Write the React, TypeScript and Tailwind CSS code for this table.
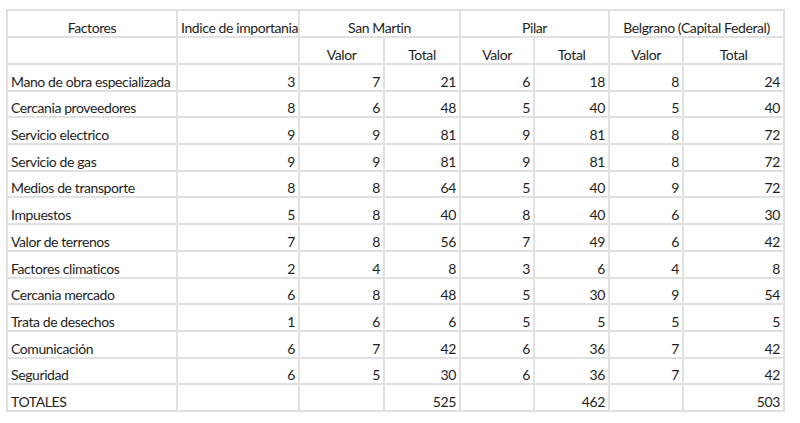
const rows: [string, number, number, number, number, number, number, number][] = [
  ["Mano de obra especializada", 3, 7, 21, 6, 18, 8, 24],
  ["Cercania proveedores", 8, 6, 48, 5, 40, 5, 40],
  ["Servicio electrico", 9, 9, 81, 9, 81, 8, 72],
  ["Servicio de gas", 9, 9, 81, 9, 81, 8, 72],
  ["Medios de transporte", 8, 8, 64, 5, 40, 9, 72],
  ["Impuestos", 5, 8, 40, 8, 40, 6, 30],
  ["Valor de terrenos", 7, 8, 56, 7, 49, 6, 42],
  ["Factores climaticos", 2, 4, 8, 3, 6, 4, 8],
  ["Cercania mercado", 6, 8, 48, 5, 30, 9, 54],
  ["Trata de desechos", 1, 6, 6, 5, 5, 5, 5],
  ["Comunicación", 6, 7, 42, 6, 36, 7, 42],
  ["Seguridad", 6, 5, 30, 6, 36, 7, 42],
]

// excel-ish cell: light grid lines, text sits near the bottom
const cell = "border-2 border-[#e1e1e1] px-[3px] pb-[1px] pt-0 align-bottom leading-none whitespace-nowrap"

export default function App() {
  return (
    <div className="w-[800px] h-[423px] bg-white pt-[9px] pl-[6px] font-['Lato',sans-serif] text-[14px] tracking-[-0.4px] text-[#1e1e1e]">
      <table className="border-collapse table-fixed w-[777px]">
        <colgroup>
          <col className="w-[170px]" />
          <col className="w-[122px]" />
          <col className="w-[85px]" />
          <col className="w-[76px]" />
          <col className="w-[74px]" />
          <col className="w-[75px]" />
          <col className="w-[74px]" />
          <col className="w-[101px]" />
        </colgroup>
        <tbody>
          <tr className="h-[27px]">
            <td className={`${cell} text-center`}>Factores</td>
            <td className={`${cell} text-center`}>Indice de importania</td>
            <td className={`${cell} text-center`} colSpan={2}>San Martin</td>
            <td className={`${cell} text-center`} colSpan={2}>Pilar</td>
            <td className={`${cell} text-center`} colSpan={2}>Belgrano (Capital Federal)</td>
          </tr>
          <tr className="h-[27px]">
            <td className={cell}></td>
            <td className={cell}></td>
            <td className={`${cell} text-center`}>Valor</td>
            <td className={`${cell} text-center`}>Total</td>
            <td className={`${cell} text-center`}>Valor</td>
            <td className={`${cell} text-center`}>Total</td>
            <td className={`${cell} text-center`}>Valor</td>
            <td className={`${cell} text-center`}>Total</td>
          </tr>
          {rows.map((r) => (
            <tr key={r[0]} className="h-[26.7px]">
              <td className={cell}>{r[0]}</td>
              {r.slice(1).map((v, i) => (
                <td key={i} className={`${cell} text-right`}>
                  {v}
                </td>
              ))}
            </tr>
          ))}
          <tr className="h-[26.7px]">
            <td className={cell}>TOTALES</td>
            <td className={cell}></td>
            <td className={cell}></td>
            <td className={`${cell} text-right`}>525</td>
            <td className={cell}></td>
            <td className={`${cell} text-right`}>462</td>
            <td className={cell}></td>
            <td className={`${cell} text-right`}>503</td>
          </tr>
        </tbody>
      </table>
    </div>
  )
}
